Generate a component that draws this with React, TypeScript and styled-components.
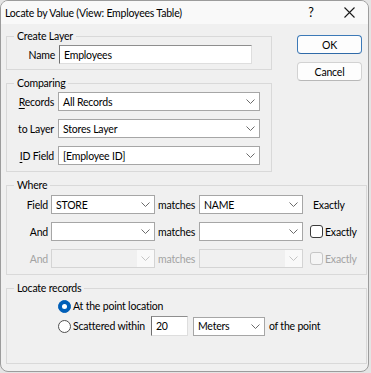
import styled, { createGlobalStyle } from 'styled-components';

const GlobalStyle = createGlobalStyle`
  html, body {
    margin: 0;
    padding: 0;
    background: #e4e4e4;
  }
  body {
    font-family: 'Segoe UI', Lato, 'Noto Sans', sans-serif;
    font-size: 10.5px;
    letter-spacing: -0.2px;
    color: #000;
  }
`;

const Window = styled.div`
  width: 369px;
  height: 372px;
  box-sizing: border-box;
  border: 1px solid #9c9c9c;
  border-radius: 8px;
  background: #f0f0f0;
  overflow: hidden;
  display: flex;
  flex-direction: column;
`;

const TitleBar = styled.div`
  height: 23px;
  flex: none;
  display: flex;
  align-items: center;
  padding-left: 4px;
  background: #f9f9f9;
`;

const Title = styled.div`
  flex: 1;
  font-size: 10.5px;
`;

const TitleButton = styled.div`
  width: 38px;
  height: 23px;
  display: flex;
  align-items: center;
  justify-content: center;
  font-size: 12.5px;
`;

const Body = styled.div`
  flex: 1;
  padding: 5px 1px 0 5px;
  display: flex;
  flex-direction: column;
  gap: 6px;
`;

const TopSection = styled.div`
  display: flex;
  gap: 25px;
`;

const LeftColumn = styled.div`
  width: 266px;
  display: flex;
  flex-direction: column;
  gap: 6px;
`;

const ButtonColumn = styled.div`
  width: 65px;
  padding-top: 6px;
  display: flex;
  flex-direction: column;
  gap: 8px;
`;

const PushButton = styled.button<{ $primary?: boolean }>`
  height: 19px;
  box-sizing: border-box;
  padding: 0;
  font: inherit;
  letter-spacing: inherit;
  color: #000;
  background: #fdfdfd;
  border: 1px solid ${p => (p.$primary ? '#3c79b7' : '#d2d2d2')};
  border-bottom-color: ${p => (p.$primary ? '#2f6aa8' : '#b8b8b8')};
  border-radius: 4px;
`;

const Group = styled.fieldset<{ $height: number }>`
  margin: 0;
  padding: 0 4px;
  min-width: 0;
  height: ${p => p.$height}px;
  box-sizing: border-box;
  border: 1px solid #d9d9d9;
  display: flex;
  flex-direction: column;
`;

const Legend = styled.legend`
  padding: 0 3px;
  margin-left: 3px;
  line-height: 14px;
`;

const Rows = styled.div<{ $top: number; $gap: number }>`
  padding-top: ${p => p.$top}px;
  display: flex;
  flex-direction: column;
  gap: ${p => p.$gap}px;
`;

const FormRow = styled.div<{ $label: number }>`
  display: grid;
  grid-template-columns: ${p => p.$label}px auto;
  column-gap: 4px;
  align-items: center;
  justify-content: start;
`;

const WhereRow = styled.div`
  display: grid;
  grid-template-columns: 37px 104px 38px 104px auto;
  column-gap: 3px;
  align-items: center;
  justify-content: start;
`;

const Label = styled.span<{ $disabled?: boolean; $align?: string; $pad?: number }>`
  text-align: ${p => p.$align || 'right'};
  padding-left: ${p => p.$pad || 0}px;
  white-space: nowrap;
  color: ${p => (p.$disabled ? '#a3a3a3' : '#000')};
`;

const Key = styled.span`
  text-decoration: underline;
  text-underline-offset: 2px;
`;

const TextBox = styled.div<{ $width: number; $height?: number }>`
  width: ${p => p.$width}px;
  height: ${p => p.$height || 19}px;
  box-sizing: border-box;
  display: flex;
  align-items: center;
  padding-left: 4px;
  background: #fff;
  border: 1px solid;
  border-color: #8e8e8e #dedede #dedede #6f6f6f;
`;

const DropBox = styled.div<{ $width: number; $disabled?: boolean }>`
  width: ${p => p.$width}px;
  height: 19px;
  box-sizing: border-box;
  display: flex;
  align-items: center;
  background: ${p => (p.$disabled ? '#f0f0f0' : '#fff')};
  border: 1px solid ${p => (p.$disabled ? '#d4d4d4' : '#a6a6a6')};
`;

const DropText = styled.span`
  flex: 1;
  padding-left: 4px;
  white-space: nowrap;
  overflow: hidden;
`;

const DropArrow = styled.span<{ $disabled?: boolean }>`
  width: 17px;
  height: 100%;
  display: flex;
  align-items: center;
  justify-content: center;
  background: ${p => (p.$disabled ? '#f9f9f9' : 'transparent')};
  color: ${p => (p.$disabled ? '#c4c4c4' : '#6b6b6b')};
`;

const CheckWrap = styled.label<{ $disabled?: boolean }>`
  display: flex;
  align-items: center;
  gap: 2px;
  padding-left: 4px;
  color: ${p => (p.$disabled ? '#a3a3a3' : '#000')};
`;

const CheckBox = styled.span<{ $disabled?: boolean }>`
  width: 13px;
  height: 13px;
  box-sizing: border-box;
  border: 1px solid ${p => (p.$disabled ? '#c6c6c6' : '#3b3b3b')};
  border-radius: 3px;
  background: ${p => (p.$disabled ? '#f5f5f5' : '#fff')};
`;

const RadioList = styled.div`
  padding: 1px 0 0 47px;
  display: flex;
  flex-direction: column;
  gap: 0;
`;

const RadioRow = styled.div`
  display: flex;
  align-items: center;
  height: 20px;
`;

const Radio = styled.span<{ $checked?: boolean }>`
  width: 13px;
  height: 13px;
  box-sizing: border-box;
  border-radius: 50%;
  flex: none;
  margin-right: 2px;
  display: flex;
  align-items: center;
  justify-content: center;
  background: ${p => (p.$checked ? '#005fb8' : '#fff')};
  border: 1px solid ${p => (p.$checked ? '#005fb8' : '#4f4f4f')};
  &::after {
    content: '';
    width: 5px;
    height: 5px;
    border-radius: 50%;
    background: #fff;
    display: ${p => (p.$checked ? 'block' : 'none')};
  }
`;

const Spacer = styled.span<{ $w: number }>`
  width: ${p => p.$w}px;
  flex: none;
`;

const Chevron = () => (
  <svg width="9" height="5" viewBox="0 0 9 5">
    <polyline points="0.5,0.5 4.5,4.5 8.5,0.5" fill="none" stroke="currentColor" strokeWidth="1" />
  </svg>
);

const CloseIcon = () => (
  <svg width="11" height="11" viewBox="0 0 11 11">
    <path d="M0.5 0.5 L10.5 10.5 M10.5 0.5 L0.5 10.5" stroke="#1a1a1a" strokeWidth="1.1" />
  </svg>
);

const Dropdown = ({ width, value, disabled }: { width: number; value?: string; disabled?: boolean }) => (
  <DropBox $width={width} $disabled={disabled}>
    <DropText>{value}</DropText>
    <DropArrow $disabled={disabled}>
      <Chevron />
    </DropArrow>
  </DropBox>
);

const Check = ({ disabled }: { disabled?: boolean }) => (
  <CheckWrap $disabled={disabled}>
    <CheckBox $disabled={disabled} />
    Exactly
  </CheckWrap>
);

const App = () => (
  <>
    <GlobalStyle />
    <Window>
      <TitleBar>
        <Title>Locate by Value (View: Employees Table)</Title>
        <TitleButton>?</TitleButton>
        <TitleButton>
          <CloseIcon />
        </TitleButton>
      </TitleBar>
      <Body>
        <TopSection>
          <LeftColumn>
            <Group $height={41}>
              <Legend>Create Layer</Legend>
              <Rows $top={2} $gap={0}>
                <FormRow $label={44}>
                  <Label>Name</Label>
                  <TextBox $width={193}>Employees</TextBox>
                </FormRow>
              </Rows>
            </Group>
            <Group $height={96}>
              <Legend>Comparing</Legend>
              <Rows $top={2} $gap={8}>
                <FormRow $label={43}>
                  <Label>
                    <Key>R</Key>ecords
                  </Label>
                  <Dropdown width={202} value="All Records" />
                </FormRow>
                <FormRow $label={43}>
                  <Label>to Layer</Label>
                  <Dropdown width={202} value="Stores Layer" />
                </FormRow>
                <FormRow $label={43}>
                  <Label>
                    <Key>I</Key>D Field
                  </Label>
                  <Dropdown width={202} value="[Employee ID]" />
                </FormRow>
              </Rows>
            </Group>
          </LeftColumn>
          <ButtonColumn>
            <PushButton $primary>OK</PushButton>
            <PushButton>Cancel</PushButton>
          </ButtonColumn>
        </TopSection>
        <Group $height={97}>
          <Legend>Where</Legend>
          <Rows $top={3} $gap={8}>
            <WhereRow>
              <Label>Field</Label>
              <Dropdown width={104} value="STORE" />
              <Label $align="left">matches</Label>
              <Dropdown width={104} value="NAME" />
              <Label $align="left" $pad={7}>
                Exactly
              </Label>
            </WhereRow>
            <WhereRow>
              <Label>And</Label>
              <Dropdown width={104} />
              <Label $align="left">matches</Label>
              <Dropdown width={104} />
              <Check />
            </WhereRow>
            <WhereRow>
              <Label $disabled>And</Label>
              <Dropdown width={104} disabled />
              <Label $disabled $align="left">
                matches
              </Label>
              <Dropdown width={104} disabled />
              <Check disabled />
            </WhereRow>
          </Rows>
        </Group>
        <Group $height={83}>
          <Legend>Locate records</Legend>
          <RadioList>
            <RadioRow>
              <Radio $checked />
              At the point location
            </RadioRow>
            <RadioRow>
              <Radio />
              Scattered within
              <Spacer $w={6} />
              <TextBox $width={37} $height={20}>
                20
              </TextBox>
              <Spacer $w={5} />
              <Dropdown width={72} value="Meters" />
              <Spacer $w={4} />
              of the point
            </RadioRow>
          </RadioList>
        </Group>
      </Body>
    </Window>
  </>
);

export default App;
